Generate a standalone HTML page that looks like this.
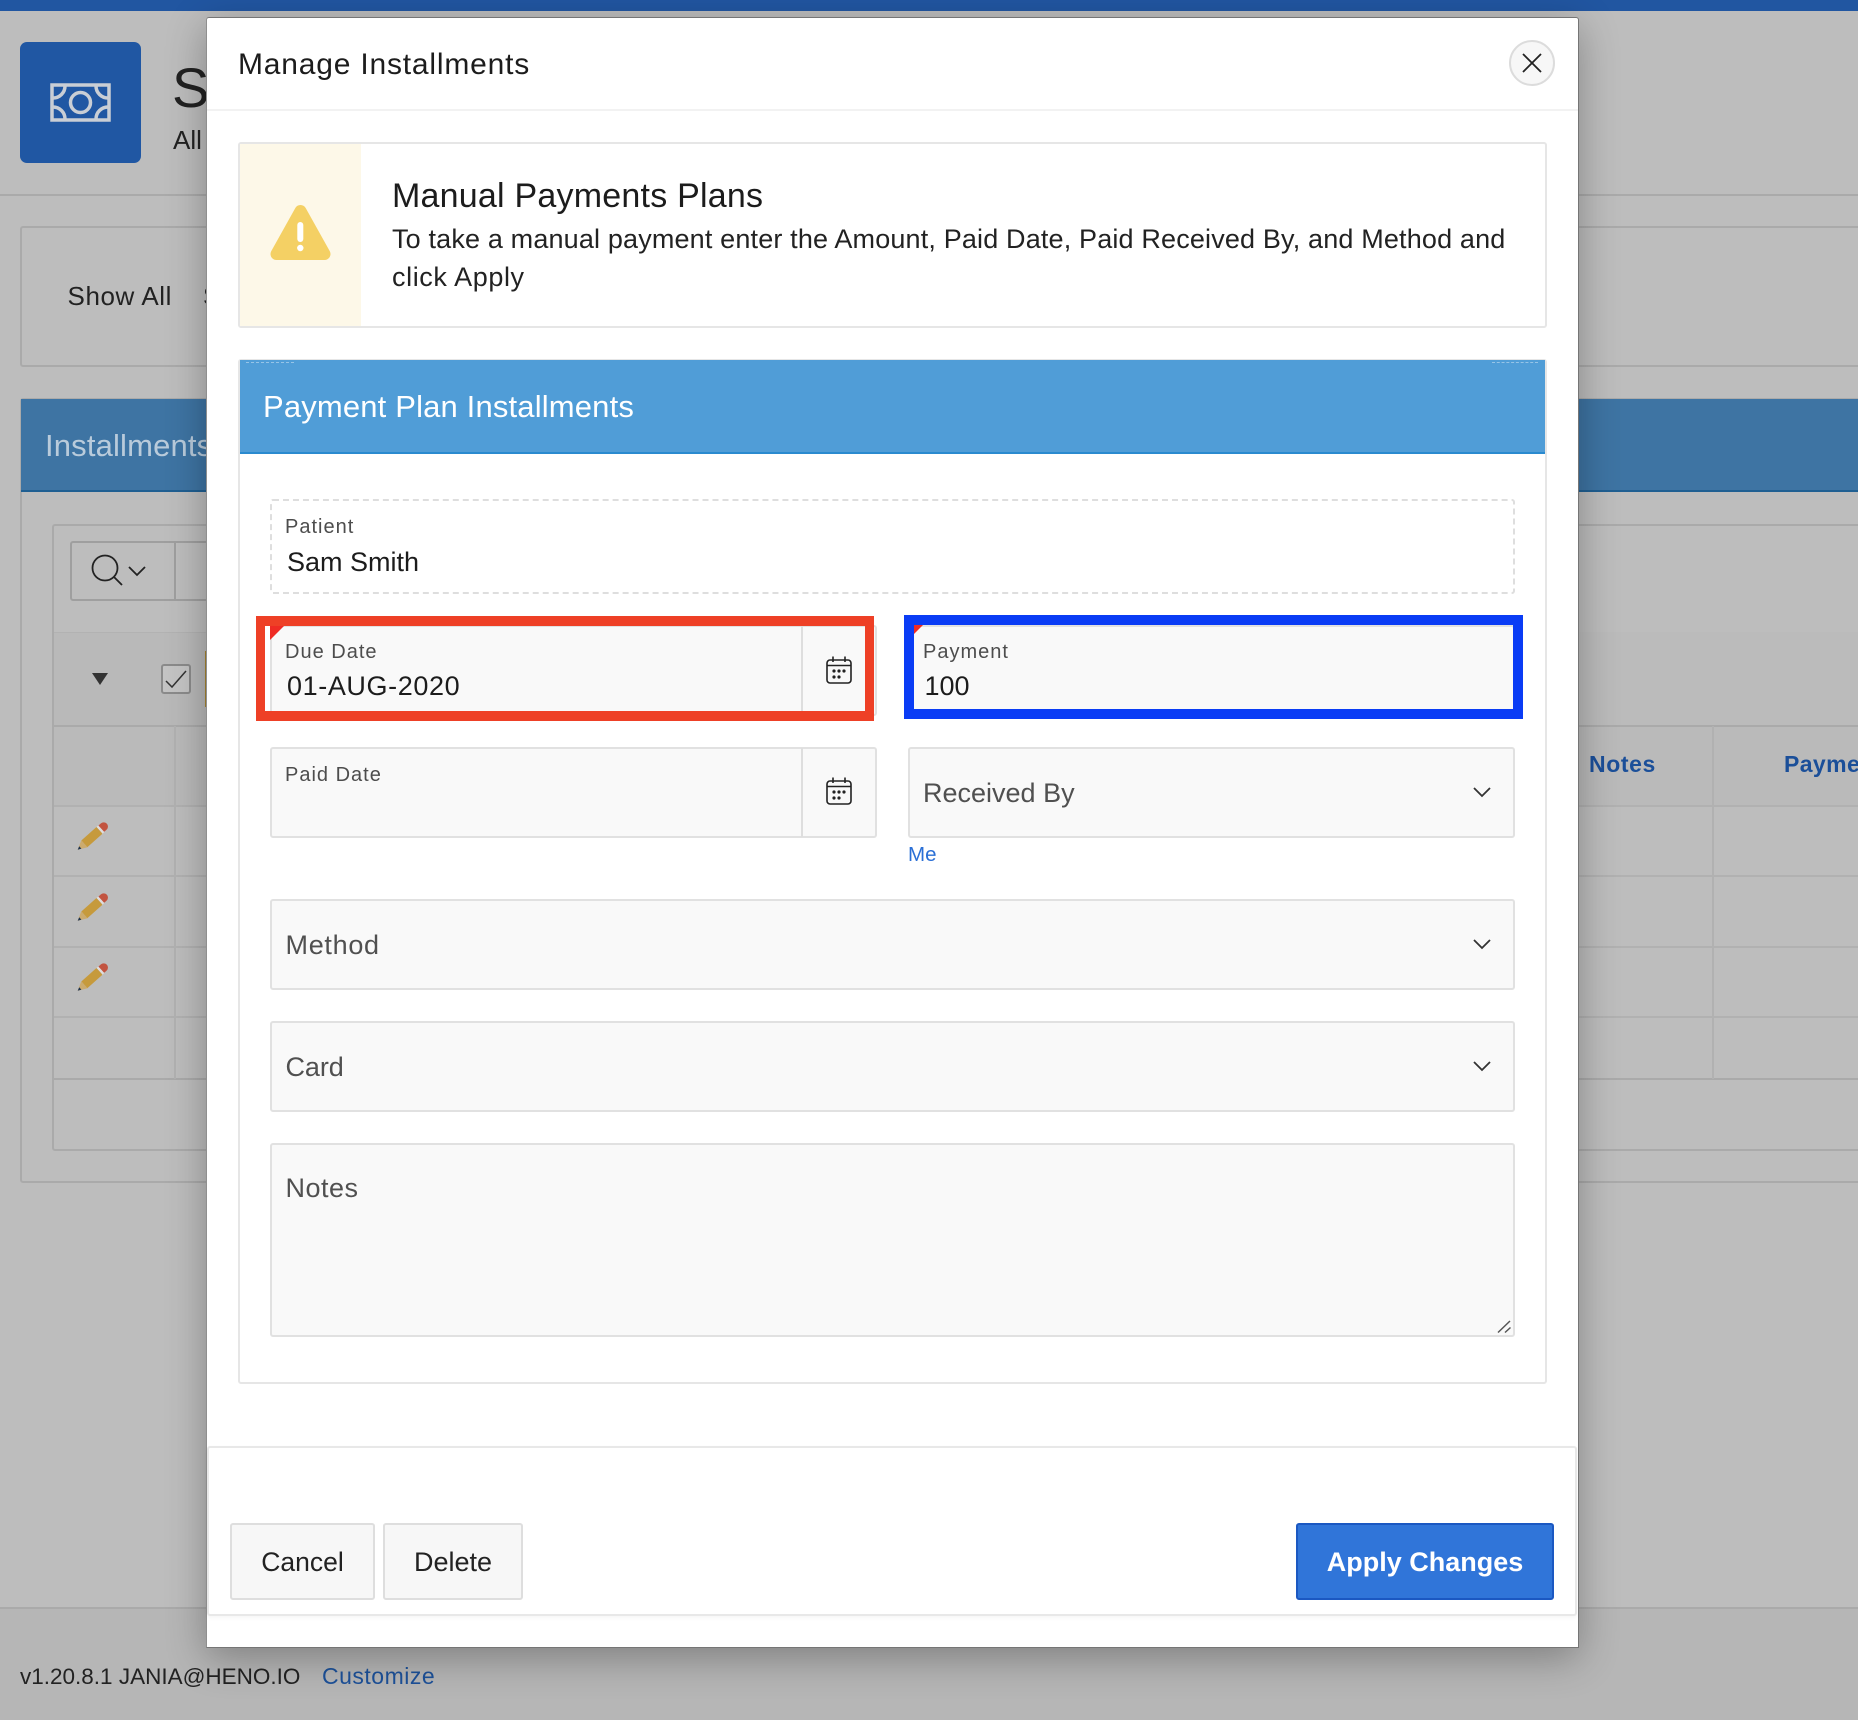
<!DOCTYPE html>
<html lang="en"><head><meta charset="utf-8"><title>Manage Installments</title>
<style>
*{box-sizing:border-box}
html,body{margin:0;padding:0}
body{width:1858px;height:1720px;position:relative;overflow:hidden;background:#bdbdbd;font-family:"Liberation Sans",Arial,sans-serif;color:#222}
.a{position:absolute}
.t{position:absolute;white-space:nowrap;line-height:40px;height:40px}
.l{position:absolute;background:#aaa}
.rl{position:absolute;background:#b1b1b1}
.f{position:absolute;background:#f9f9f9;border:2px solid #e1e1e1;border-radius:3px}
.lb{font-size:20px;letter-spacing:1px;color:#4d4d4d}
.v{font-size:27px;color:#1c1c1c}
.ph{font-size:27px;color:#505050}
.btn{position:absolute;background:#f7f7f7;border:2px solid #dedede;border-radius:3px;top:1523px;height:77px;font-size:27px;line-height:74px;text-align:center;color:#222}
svg{position:absolute;display:block}
</style></head><body>

<!-- page behind the dialog -->
<div class="a" style="left:0;top:0;width:1858px;height:11px;background:#2156a1"></div>
<div class="a" style="left:20px;top:42px;width:121px;height:121px;background:#2057a3;border-radius:7px"></div>
<svg style="left:50px;top:83px" width="61" height="39" viewBox="0 0 61 39" fill="none" stroke="#c9ced5" stroke-width="3.500">
<rect x="2" y="2" width="57" height="35"/><circle cx="30.500" cy="19.500" r="10"/>
<path d="M3 15A12 12 0 0 0 15 3M46 3A12 12 0 0 0 58 15M3 24A12 12 0 0 1 15 36M46 36A12 12 0 0 1 58 24"/></svg>
<div class="t" style="left:172px;top:68px;font-size:56px;color:#222">S</div>
<div class="t" style="left:173px;top:120px;font-size:26px">All</div>
<div class="l" style="left:0;top:194px;width:1858px;height:2px"></div>

<div class="a" style="left:20px;top:226px;width:1900px;height:141px;border:2px solid #aaa;border-radius:3px"></div>
<div class="t" style="left:67.500px;top:276px;font-size:26px;letter-spacing:.6px">Show All</div>
<div class="t" style="left:203px;top:276px;font-size:26px">S</div>

<div class="a" style="left:20px;top:398px;width:1900px;height:785px;border:2px solid #aaa;border-radius:3px"></div>
<div class="a" style="left:21px;top:399px;width:1837px;height:93px;background:#3e74a3;border-bottom:2px solid #1f5f92"></div>
<div class="t" style="left:45px;top:426px;font-size:31px;letter-spacing:.16px;color:#b9cbdb">Installments</div>

<div class="a" style="left:52px;top:524px;width:1900px;height:627px;border:2px solid #aaa;border-radius:3px"></div>
<div class="a" style="left:54px;top:632px;width:153px;height:93px;background:#b9b9b9;border-top:1px solid #b2b2b2"></div>
<div class="a" style="left:1579px;top:632px;width:279px;height:93px;background:#bbb"></div>
<div class="a" style="left:70px;top:541px;width:200px;height:60px;border:2px solid #9f9f9f;border-radius:3px"></div>
<div class="a" style="left:174px;top:541px;width:2px;height:60px;background:#9f9f9f"></div>
<svg style="left:90px;top:552px" width="62" height="36" viewBox="0 0 62 36" fill="none" stroke="#222" stroke-width="1.800">
<circle cx="15" cy="16" r="12.500"/><path d="M24 25l8 8M39 15l8 8 8-8"/></svg>
<svg style="left:92px;top:673px" width="16" height="12" viewBox="0 0 16 12"><path d="M0 0H16L8 12Z" fill="#333"/></svg>
<div class="a" style="left:161px;top:664px;width:30px;height:30px;background:#c4c4c4;border:2px solid #8b8b8b;border-radius:3px"></div>
<svg style="left:165px;top:669px" width="22" height="20" viewBox="0 0 22 20" fill="none" stroke="#333" stroke-width="1.500"><path d="M1 12l6 6L21 2"/></svg>
<div class="a" style="left:205px;top:651px;width:2px;height:56px;background:#a98732"></div>

<div class="l" style="left:54px;top:725px;width:1804px;height:2px"></div>
<div class="a" style="left:54px;top:727px;width:1804px;height:79px;background:#bababa"></div>
<div class="rl" style="left:54px;top:805px;width:1804px;height:2px"></div>
<div class="rl" style="left:54px;top:875px;width:1804px;height:2px"></div>
<div class="rl" style="left:54px;top:946px;width:1804px;height:2px"></div>
<div class="rl" style="left:54px;top:1016px;width:1804px;height:2px"></div>
<div class="l" style="left:54px;top:1078px;width:1804px;height:2px"></div>
<div class="rl" style="left:174px;top:726px;width:2px;height:353px"></div>
<div class="rl" style="left:1712px;top:726px;width:2px;height:353px"></div>
<div class="t" style="left:1589px;top:744px;font-size:23px;font-weight:bold;letter-spacing:.6px;color:#1b4f99">Notes</div>
<div class="t" style="left:1784px;top:744px;font-size:23px;font-weight:bold;letter-spacing:.4px;color:#1b4f99">Payment</div>

<svg style="left:77px;top:821px" width="31" height="31" viewBox="0 0 31 31" fill="none"><path d="M.7 28.700L10.700 26.200 4.300 19.200Z" fill="#ccab6e"/><path d="M.7 28.700L4.400 27.600 2.200 25.200Z" fill="#1d3350"/><path d="M24.300 7.700L26.700 5.600" stroke="#c25440" stroke-width="8.500" stroke-linecap="round"/><path d="M22.450 9.400L24.300 7.700" stroke="#ddd" stroke-width="9"/><path d="M7.450 22.700L22.450 9.400" stroke="#c69a3c" stroke-width="9"/></svg>
<svg style="left:77px;top:892px" width="31" height="31" viewBox="0 0 31 31" fill="none"><path d="M.7 28.700L10.700 26.200 4.300 19.200Z" fill="#ccab6e"/><path d="M.7 28.700L4.400 27.600 2.200 25.200Z" fill="#1d3350"/><path d="M24.300 7.700L26.700 5.600" stroke="#c25440" stroke-width="8.500" stroke-linecap="round"/><path d="M22.450 9.400L24.300 7.700" stroke="#ddd" stroke-width="9"/><path d="M7.450 22.700L22.450 9.400" stroke="#c69a3c" stroke-width="9"/></svg>
<svg style="left:77px;top:962px" width="31" height="31" viewBox="0 0 31 31" fill="none"><path d="M.7 28.700L10.700 26.200 4.300 19.200Z" fill="#ccab6e"/><path d="M.7 28.700L4.400 27.600 2.200 25.200Z" fill="#1d3350"/><path d="M24.300 7.700L26.700 5.600" stroke="#c25440" stroke-width="8.500" stroke-linecap="round"/><path d="M22.450 9.400L24.300 7.700" stroke="#ddd" stroke-width="9"/><path d="M7.450 22.700L22.450 9.400" stroke="#c69a3c" stroke-width="9"/></svg>

<div class="a" style="left:0;top:1607px;width:1858px;height:113px;background:#b6b6b6;border-top:2px solid #aaa"></div>
<div class="t" style="left:20px;top:1657px;font-size:22.500px;color:#222">v1.20.8.1 JANIA@HENO.IO</div>
<div class="t" style="left:322px;top:1656px;font-size:23px;letter-spacing:.5px;color:#1d5199">Customize</div>

<!-- dialog -->
<div class="a" style="left:206px;top:17px;width:1373px;height:1631px;background:#fff;border:1px solid #757575;border-left-color:#8f8f8f;border-radius:3px 3px 0 0;box-shadow:0 10px 40px rgba(0,0,0,.3)"></div>
<div class="t" style="left:238px;top:45px;font-size:30px;letter-spacing:.8px;color:#1c1c1c">Manage Installments</div>
<div class="a" style="left:207px;top:109px;width:1371px;height:2px;background:#f2f2f2"></div>
<div class="a" style="left:1509px;top:40px;width:46px;height:46px;border-radius:50%;background:#f7f7f7;border:2px solid #dcdcdc"></div>
<svg style="left:1522px;top:53px" width="20" height="20" viewBox="0 0 20 20" fill="none" stroke="#222" stroke-width="1.800"><path d="M1 1L19 19M19 1L1 19"/></svg>

<!-- alert -->
<div class="a" style="left:238px;top:142px;width:1309px;height:186px;background:#fff;border:2px solid #e6e6e6;border-radius:3px"></div>
<div class="a" style="left:240px;top:144px;width:121px;height:182px;background:#fdf8e8"></div>
<svg style="left:270px;top:203px" width="61" height="58" viewBox="0 0 61 58"><path d="M30.500 8L54.500 51H6.500Z" fill="#f4d064" stroke="#f4d064" stroke-width="12" stroke-linejoin="round"/><rect x="27.300" y="19" width="6" height="20" rx="3" fill="#fff"/><circle cx="30.300" cy="45" r="3.200" fill="#fff"/></svg>
<div class="t" style="left:392px;top:176px;font-size:34px;letter-spacing:.22px;color:#1c1c1c">Manual Payments Plans</div>
<div class="t" style="left:392px;top:219px;font-size:27px;letter-spacing:.16px">To take a manual payment enter the Amount, Paid Date, Paid Received By, and Method and</div>
<div class="t" style="left:392px;top:257px;font-size:27px;letter-spacing:.6px">click Apply</div>

<!-- region -->
<div class="a" style="left:238px;top:359px;width:1309px;height:1025px;background:#fff;border:2px solid #e6e6e6;border-radius:3px"></div>
<div class="a" style="left:240px;top:360px;width:1305px;height:94px;background:#509dd7;border-bottom:2px solid #2a8acf"></div>
<div class="a" style="left:246px;top:362px;width:48px;border-top:1px dashed rgba(255,255,255,.4)"></div>
<div class="a" style="left:1492px;top:362px;width:46px;border-top:1px dashed rgba(255,255,255,.4)"></div>
<div class="t" style="left:263px;top:387px;font-size:31px;letter-spacing:.16px;color:#fff">Payment Plan Installments</div>

<div class="a" style="left:270px;top:499px;width:1245px;height:95px;border:2px dashed #dedede;border-radius:3px"></div>
<div class="t lb" style="left:285px;top:507px">Patient</div>
<div class="t" style="left:287px;top:542px;font-size:27px;color:#1c1c1c">Sam Smith</div>

<!-- due date -->
<div class="f" style="left:270px;top:625px;width:607px;height:91px"></div>
<div class="a" style="left:801px;top:626px;width:2px;height:89px;background:#dedede"></div>
<div class="a" style="left:270px;top:626px;width:0;height:0;border-top:14px solid #ef2b24;border-right:14px solid transparent"></div>
<div class="t lb" style="left:285px;top:632px">Due Date</div>
<div class="t v" style="left:287px;top:666px;letter-spacing:.6px">01-AUG-2020</div>
<svg style="left:826px;top:656px" width="26" height="28" viewBox="0 0 26 28" fill="none" stroke="#222" stroke-width="1.600"><rect x="1" y="4" width="24" height="23" rx="3"/><path d="M1 9.500H25M7 .5V6M19 .5V6"/><g fill="#222" stroke="none"><circle cx="8" cy="15" r="1.600"/><circle cx="13" cy="15" r="1.600"/><circle cx="18" cy="15" r="1.600"/><circle cx="8" cy="21" r="1.600"/><circle cx="13" cy="21" r="1.600"/></g></svg>
<div class="a" style="left:256px;top:616px;width:618px;height:105px;border:solid #ee4026;border-width:10px 9px"></div>

<!-- payment -->
<div class="f" style="left:908px;top:625px;width:607px;height:91px"></div>
<div class="a" style="left:914px;top:625px;width:0;height:0;border-top:9px solid #ef2b24;border-right:9px solid transparent"></div>
<div class="t lb" style="left:923px;top:632px">Payment</div>
<div class="t v" style="left:924.500px;top:666px">100</div>
<div class="a" style="left:904px;top:615px;width:619px;height:104px;border:solid #0a3cf5;border-width:10px 10px"></div>

<!-- paid date -->
<div class="f" style="left:270px;top:747px;width:607px;height:91px"></div>
<div class="a" style="left:801px;top:748px;width:2px;height:89px;background:#dedede"></div>
<div class="t lb" style="left:285px;top:755px">Paid Date</div>
<svg style="left:826px;top:777px" width="26" height="28" viewBox="0 0 26 28" fill="none" stroke="#222" stroke-width="1.600"><rect x="1" y="4" width="24" height="23" rx="3"/><path d="M1 9.500H25M7 .5V6M19 .5V6"/><g fill="#222" stroke="none"><circle cx="8" cy="15" r="1.600"/><circle cx="13" cy="15" r="1.600"/><circle cx="18" cy="15" r="1.600"/><circle cx="8" cy="21" r="1.600"/><circle cx="13" cy="21" r="1.600"/></g></svg>

<!-- received by -->
<div class="f" style="left:908px;top:747px;width:607px;height:91px"></div>
<div class="t ph" style="left:923px;top:773px">Received By</div>
<svg style="left:1473px;top:787px" width="18" height="11" viewBox="0 0 18 11" fill="none" stroke="#333" stroke-width="1.800"><path d="M1 1l8 8 8-8"/></svg>
<div class="t" style="left:908px;top:835px;font-size:20.500px;color:#2a6fd6">Me</div>

<div class="f" style="left:270px;top:899px;width:1245px;height:91px"></div>
<div class="t ph" style="left:285.500px;top:925px;letter-spacing:.7px">Method</div>
<svg style="left:1473px;top:939px" width="18" height="11" viewBox="0 0 18 11" fill="none" stroke="#333" stroke-width="1.800"><path d="M1 1l8 8 8-8"/></svg>

<div class="f" style="left:270px;top:1021px;width:1245px;height:91px"></div>
<div class="t ph" style="left:285.500px;top:1047px;letter-spacing:-.1px">Card</div>
<svg style="left:1473px;top:1061px" width="18" height="11" viewBox="0 0 18 11" fill="none" stroke="#333" stroke-width="1.800"><path d="M1 1l8 8 8-8"/></svg>

<div class="f" style="left:270px;top:1143px;width:1245px;height:194px"></div>
<div class="t ph" style="left:285.500px;top:1168px;letter-spacing:.5px">Notes</div>
<svg style="left:1496px;top:1319px" width="16" height="15" viewBox="0 0 16 15" fill="none" stroke="#555" stroke-width="1.500"><path d="M2 13.500L14 2M9 13.500L14.500 8.500"/></svg>

<!-- dialog buttons -->
<div class="a" style="left:207px;top:1446px;width:1370px;height:170px;background:#fff;border:2px solid #e8e8e8;border-radius:3px;box-shadow:0 2px 4px rgba(0,0,0,.04)"></div>
<div class="btn" style="left:230px;width:145px;font-size:26.500px">Cancel</div>
<div class="btn" style="left:383px;width:140px">Delete</div>
<div class="btn" style="left:1296px;width:258px;background:#3075d9;border-color:#1b58c2;color:#fff;font-weight:bold">Apply Changes</div>

</body></html>
